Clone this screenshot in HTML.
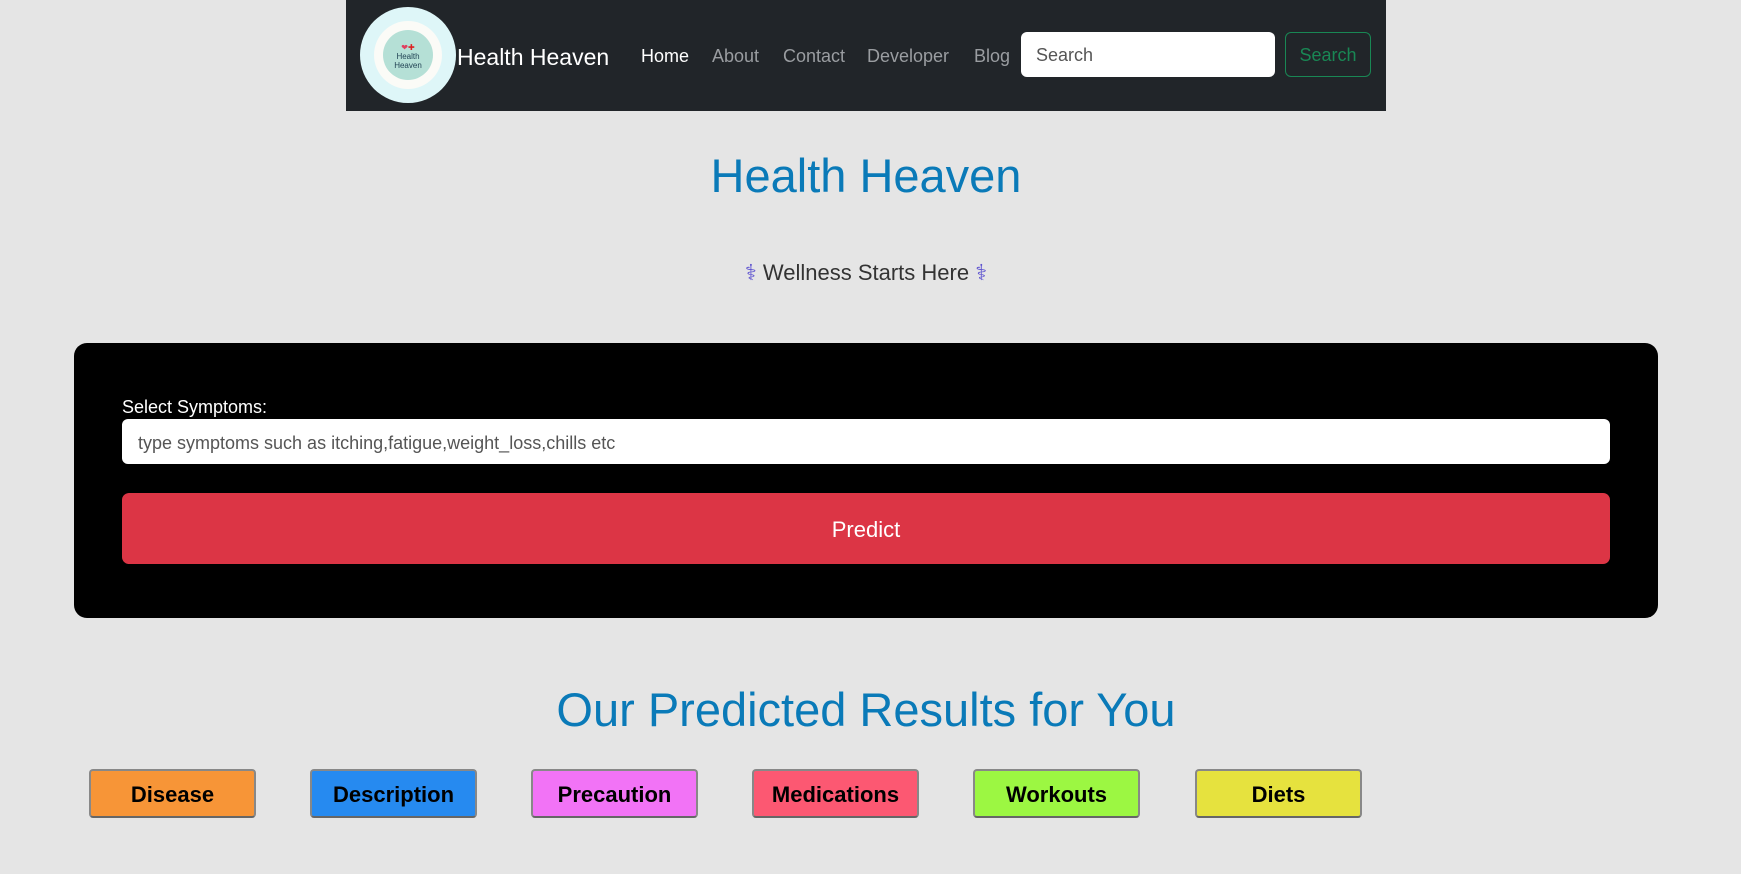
<!DOCTYPE html>
<html><head><meta charset="utf-8"><style>
*{box-sizing:border-box;margin:0;padding:0}
body{width:1741px;height:874px;background:#e5e5e5;font-family:"Liberation Sans",sans-serif;position:relative;overflow:hidden}
.nav{position:absolute;left:346px;top:0;width:1040px;height:111px;background:#212529}
.logo{position:absolute;left:360px;top:7px;width:96px;height:96px;border-radius:50%;background:#def6f8}
.logo .in{position:absolute;left:14px;top:14px;width:68px;height:68px;border-radius:50%;background:#fbfbf7}
.logo .in2{position:absolute;left:9px;top:9px;width:50px;height:50px;border-radius:50%;background:#b5e0d6;font-size:8px;color:#245;text-align:center;padding-top:13px;line-height:9px}
.t{position:absolute;white-space:nowrap}
.nl{color:#9a9da1;font-size:18px;top:46px}
.sin{position:absolute;left:1021px;top:32px;width:254px;height:45px;background:#fff;border-radius:6px;color:#555;font-size:18px;padding:13px 15px}
.sbtn{position:absolute;left:1285px;top:32px;width:86px;height:45px;border:1px solid #198754;border-radius:6px;color:#198754;font-size:18px;text-align:center;line-height:45px}
.box{position:absolute;left:74px;top:343px;width:1584px;height:275px;background:#000;border-radius:13px}
.inp{position:absolute;left:122px;top:419px;width:1488px;height:45px;background:#fff;border-radius:6px;color:#555;font-size:18px;padding:14px 16px}
.pred{position:absolute;left:122px;top:493px;width:1488px;height:71px;background:#dc3545;border-radius:7px;color:#fff;font-size:22px;text-align:center;line-height:73px}
.b{position:absolute;top:769px;width:167px;height:49px;border:2px solid #888;border-bottom-color:#666;border-radius:4px;font-weight:bold;font-size:22px;text-align:center;line-height:47px;color:#000}
</style></head><body>
<div class="nav"></div>
<div class="logo"><div class="in"><div class="in2"><span style="color:#e04060">❤</span><span style="color:#d22">✚</span><br>Health<br>Heaven</div></div></div>
<div class="t" style="left:457px;top:44px;color:#fff;font-size:23px">Health Heaven</div>
<div class="t nl" style="left:641px;color:#fff">Home</div>
<div class="t nl" style="left:712px">About</div>
<div class="t nl" style="left:783px">Contact</div>
<div class="t nl" style="left:867px">Developer</div>
<div class="t nl" style="left:974px">Blog</div>
<div class="sin">Search</div>
<div class="sbtn">Search</div>
<div class="t" style="left:0;width:1732px;text-align:center;top:148px;font-size:47px;color:#0a7ab8">Health Heaven</div>
<div class="t" style="left:0;width:1732px;text-align:center;top:260px;font-size:22px;color:#333"><span style="color:#5a4fcf">⚕</span> Wellness Starts Here <span style="color:#5a4fcf">⚕</span></div>
<div class="box"></div>
<div class="t" style="left:122px;top:397px;color:#fff;font-size:18px">Select Symptoms:</div>
<div class="inp">type symptoms such as itching,fatigue,weight_loss,chills etc</div>
<div class="pred">Predict</div>
<div class="t" style="left:0;width:1732px;text-align:center;top:682px;font-size:47px;color:#0a7ab8">Our Predicted Results for You</div>
<div class="b" style="left:89px;background:#f79537">Disease</div>
<div class="b" style="left:310px;background:#268af0">Description</div>
<div class="b" style="left:531px;background:#f273f6">Precaution</div>
<div class="b" style="left:752px;background:#fc5872">Medications</div>
<div class="b" style="left:973px;background:#9cf742">Workouts</div>
<div class="b" style="left:1195px;background:#e6e23e">Diets</div>
</body></html>
